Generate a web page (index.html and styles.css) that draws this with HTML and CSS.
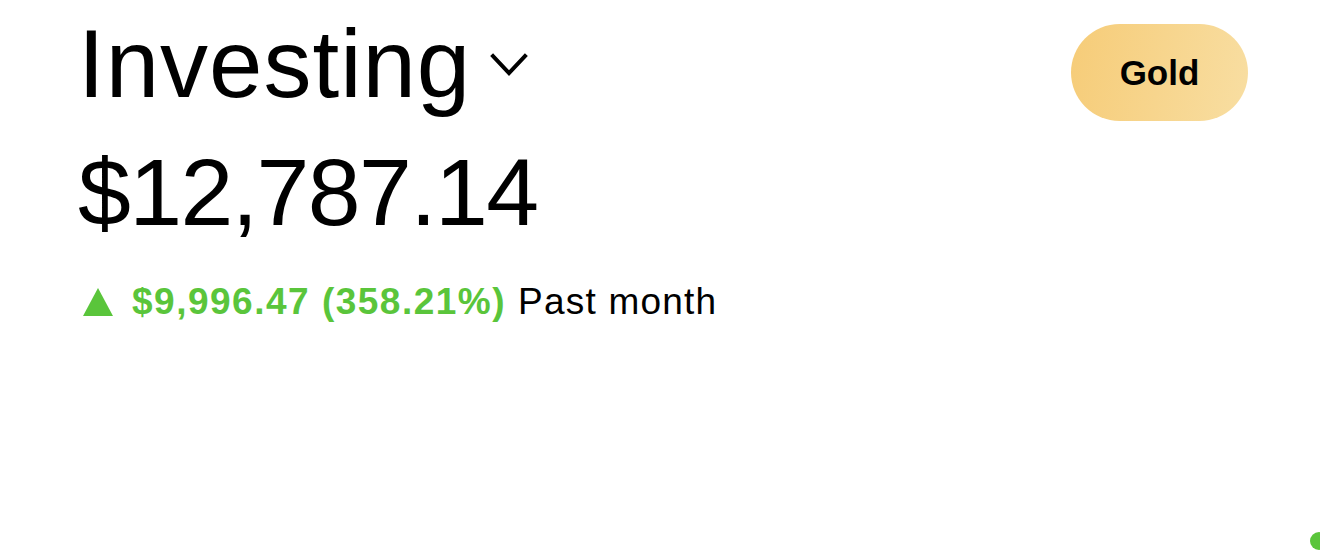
FILE: index.html
```html
<!DOCTYPE html>
<html>
<head>
	<meta charset="UTF-8">
	<title>Investing</title>
	<link rel="stylesheet" href="styles.css">
</head>
<body>
	<div id="main">
		<div class="summary">
			<h1 class="title">Investing
				<svg class="chevron" width="40" height="26" viewBox="0 0 40 26">
					<path d="M4 4 L20 21 L36 4" fill="none" stroke="#000" stroke-width="4" stroke-linecap="square" stroke-linejoin="miter"/>
				</svg>
			</h1>
			<div class="balance">$12,787.14</div>
			<div class="change">
				<svg class="arrow" width="32" height="30" viewBox="0 0 32 30">
					<polygon points="16,1 31,29 1,29" fill="#5ac53b"/>
				</svg>
				<span class="gain">$9,996.47 (358.21%)</span>
				<span class="period">Past month</span>
			</div>
		</div>
		<a class="gold" href="#">Gold</a>
	</div>
	<div class="dot"></div>
</body>
</html>
```
FILE: styles.css
```css
*
{
	margin: 0px;
	padding: 0px;
	border: 0px;
}
html, body
{
	height: 100%;
	overflow: hidden;
	background: #FFFFFF;
	font-family: "Liberation Sans", Arial, sans-serif;
	color: #000000;
}
#main
{
	display: flex;
	justify-content: space-between;
	align-items: flex-start;
	padding: 16px 72px 0 78px;
}
.title
{
	display: flex;
	align-items: center;
	font-size: 96px;
	font-weight: normal;
	line-height: 96px;
	letter-spacing: 1px;
}
.chevron
{
	margin-left: 18px;
	margin-top: 2px;
}
.balance
{
	margin-top: 33px;
	font-size: 95px;
	line-height: 95px;
	letter-spacing: -1.6px;
}
.change
{
	display: flex;
	align-items: baseline;
	margin-top: 43px;
	font-size: 37px;
	line-height: 37px;
}
.arrow
{
	align-self: center;
	margin-left: 4px;
	margin-right: 18px;
}
.gain
{
	color: #5ac53b;
	font-weight: bold;
	letter-spacing: 1.5px;
	margin-right: 12px;
}
.period
{
	letter-spacing: 1.2px;
}
.gold
{
	display: flex;
	align-items: center;
	justify-content: center;
	width: 177px;
	height: 97px;
	margin-top: 8px;
	border-radius: 49px;
	background: linear-gradient(100deg, #F6CC78, #F8DEA2);
	color: #000000;
	font-size: 35px;
	font-weight: bold;
	text-decoration: none;
}
.dot
{
	position: absolute;
	left: 1310px;
	top: 532px;
	width: 18px;
	height: 18px;
	border-radius: 50%;
	background: #5ac53b;
}
```
